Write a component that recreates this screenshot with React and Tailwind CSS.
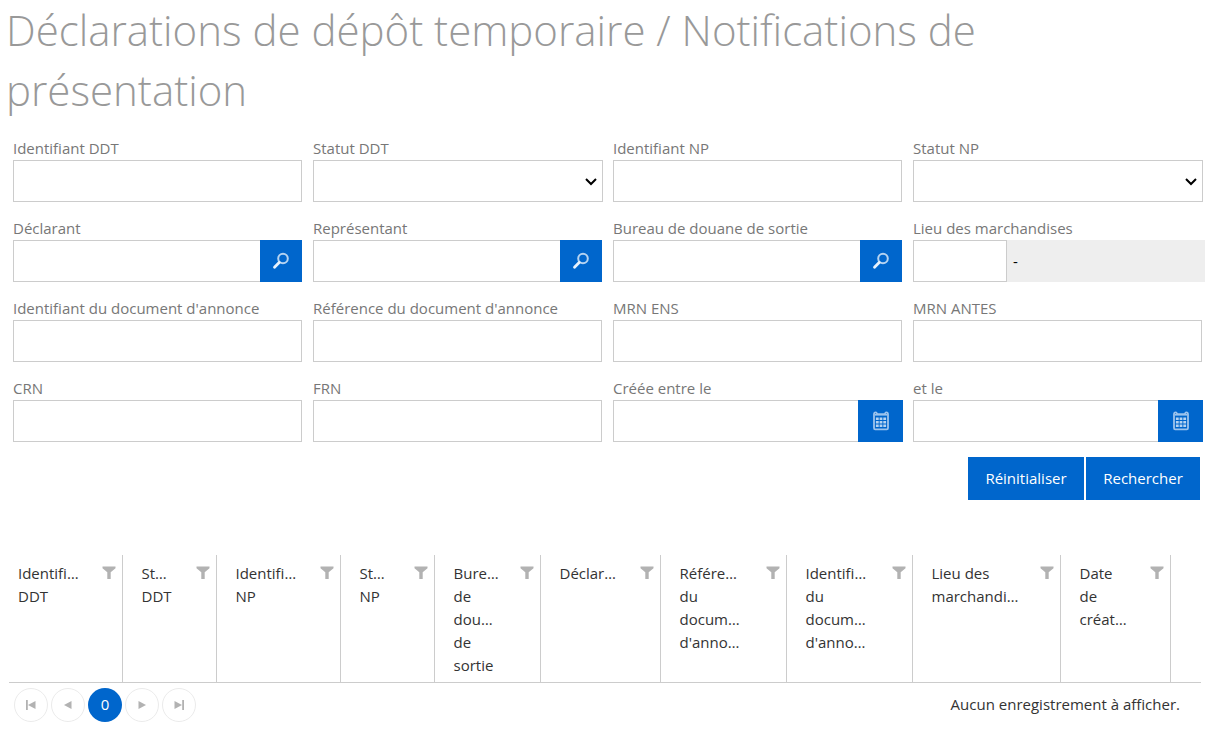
import React from "react";

const BORDER = "border border-[#cccccc]";

function Field({ id, label, children }) {
  return (
    <div className="min-w-0">
      <label htmlFor={id} className="block h-6 text-[15px] leading-6 text-[#777777]">
        {label}
      </label>
      {children}
    </div>
  );
}

function TextField({ id, label }) {
  return (
    <Field id={id} label={label}>
      <input id={id} type="text" className={`block h-[42px] w-full bg-white px-2 ${BORDER}`} />
    </Field>
  );
}

function SelectField({ id, label }) {
  return (
    <Field id={id} label={label}>
      <div className="relative -mr-px">
        <select id={id} className={`block h-[42px] w-full appearance-none bg-white px-2 text-black ${BORDER}`}>
          <option value=""></option>
        </select>
        <svg
          className="pointer-events-none absolute top-[17px] right-[5px]"
          width="14"
          height="10"
          viewBox="0 0 14 10"
          fill="none"
          aria-hidden="true"
        >
          <path d="M2 2 7 7 12 2" stroke="#000000" strokeWidth="2" />
        </svg>
      </div>
    </Field>
  );
}

function SearchIcon() {
  return (
    <svg width="18" height="18" viewBox="0 0 18 18" fill="none" aria-hidden="true">
      <circle cx="11" cy="6.500" r="4.800" stroke="#b5d3f1" strokeWidth="2" />
      <path d="M7.200 10.400 2.500 15.200" stroke="#e8f2fc" strokeWidth="2.800" strokeLinecap="round" />
    </svg>
  );
}

function CalendarIcon() {
  return (
    <svg width="18" height="20" viewBox="0 0 18 20" fill="none" aria-hidden="true">
      <path
        d="M2 17V3.500C2 2.200 2.700 1.300 3.700 1.300 4.700 1.300 4.900 3.200 6 3.200h6c1.100 0 1.300-1.900 2.300-1.900 1 0 1.700.9 1.700 2.200V17c0 .8-.4 1.300-1.200 1.300H3.200C2.400 18.300 2 17.800 2 17Z"
        stroke="#9cc3ec"
        strokeWidth="1.800"
      />
      <path d="M3 3.800h12" stroke="#9cc3ec" strokeWidth="1.600" />
      <g fill="#b5d3f1">
        {[6.5, 10, 13.5].map((y) =>
          [3.9, 7.6, 11.3].map((x) => <rect key={`${x}-${y}`} x={x} y={y} width="2.800" height="2.500" />)
        )}
      </g>
    </svg>
  );
}

function SearchField({ id, label }) {
  return (
    <Field id={id} label={label}>
      <div className="flex">
        <input id={id} type="text" className={`h-[42px] min-w-0 flex-1 border-r-0 bg-white px-2 ${BORDER}`} />
        <button
          type="button"
          aria-label={`Chercher : ${label}`}
          className="flex h-[42px] w-[42px] items-center justify-center bg-[#0066cc]"
        >
          <SearchIcon />
        </button>
      </div>
    </Field>
  );
}

function DateField({ id, label }) {
  return (
    <Field id={id} label={label}>
      <div className="-mr-px flex">
        <input id={id} type="text" className={`h-[42px] min-w-0 flex-1 border-r-0 bg-white px-2 ${BORDER}`} />
        <button
          type="button"
          aria-label={`Calendrier : ${label}`}
          className="flex h-[42px] w-[45px] items-center justify-center bg-[#0066cc]"
        >
          <CalendarIcon />
        </button>
      </div>
    </Field>
  );
}

function LocationField({ id, label }) {
  return (
    <Field id={id} label={label}>
      <div className="-mr-[3px] flex bg-[#eeeeee]">
        <input id={id} type="text" className={`h-[42px] w-[94px] bg-white px-2 ${BORDER}`} />
        <span className="flex-1 px-[6px] text-[15px] leading-[42px] text-black">-</span>
      </div>
    </Field>
  );
}

function FilterIcon() {
  return (
    <svg width="14" height="14" viewBox="0 0 14 14" aria-hidden="true">
      <path d="M.5.500h13v1.700L8.700 6.300V13H5.300V6.300L.5 2.200Z" fill="#b2b2b2" />
    </svg>
  );
}

const COLUMNS = [
  { width: "w-[113px]", lines: ["Identifi…", "DDT"] },
  { width: "w-[94px]", lines: ["St…", "DDT"] },
  { width: "w-[124px]", lines: ["Identifi…", "NP"] },
  { width: "w-[94px]", lines: ["St…", "NP"] },
  { width: "w-[106px]", lines: ["Bure…", "de", "dou…", "de", "sortie"] },
  { width: "w-[120px]", lines: ["Déclar…"] },
  { width: "w-[126px]", lines: ["Référe…", "du", "docum…", "d'anno…"] },
  { width: "w-[126px]", lines: ["Identifi…", "du", "docum…", "d'anno…"] },
  { width: "w-[148px]", lines: ["Lieu des", "marchandi…"] },
  { width: "w-[110px]", lines: ["Date", "de", "créat…"] },
];

function ResultsTable() {
  return (
    <table className="w-full table-fixed border-collapse text-[15px] leading-[23px] text-[#333333]">
      <colgroup>
        {COLUMNS.map((c, i) => (
          <col key={i} className={c.width} />
        ))}
        <col />
      </colgroup>
      <thead>
        <tr className="h-[127px] border-b border-[#cccccc]">
          {COLUMNS.map((c, i) => (
            <th
              key={i}
              scope="col"
              className={`border-r border-[#cccccc] pt-[7px] pr-[6px] text-left align-top font-normal ${
                i === 0 ? "pl-[9px]" : "pl-[19px]"
              }`}
            >
              <div className="flex items-start justify-between">
                <span className="whitespace-nowrap">
                  {c.lines.map((line, n) => (
                    <span key={n} className="block">
                      {line}
                    </span>
                  ))}
                </span>
                <button type="button" aria-label="Filtrer" className="mt-1 shrink-0">
                  <FilterIcon />
                </button>
              </div>
            </th>
          ))}
          <td></td>
        </tr>
      </thead>
    </table>
  );
}

function PagerButton({ label, children }) {
  return (
    <button
      type="button"
      aria-label={label}
      className="flex h-[34px] w-[34px] items-center justify-center rounded-full border border-[#ebebeb]"
    >
      <svg width="12" height="12" viewBox="0 0 12 12" fill="#b2b2b2" aria-hidden="true">
        {children}
      </svg>
    </button>
  );
}

function Pager() {
  return (
    <div className="flex items-center justify-between pt-[5px] pr-[21px] pl-[5px] text-[15px] text-[#333333]">
      <nav aria-label="Pagination" className="flex gap-[3px]">
        <PagerButton label="Première page">
          <path d="M1 1h1.800v10H1ZM10.500 2v8L3 6Z" />
        </PagerButton>
        <PagerButton label="Page précédente">
          <path d="M9.500 2v8L2 6Z" />
        </PagerButton>
        <button
          type="button"
          aria-current="page"
          className="h-[34px] w-[34px] rounded-full bg-[#0066cc] text-[15px] text-white"
        >
          0
        </button>
        <PagerButton label="Page suivante">
          <path d="M2.500 2v8L10 6Z" />
        </PagerButton>
        <PagerButton label="Dernière page">
          <path d="M1.500 2v8L9 6ZM9.200 1H11v10H9.200Z" />
        </PagerButton>
      </nav>
      <p>Aucun enregistrement à afficher.</p>
    </div>
  );
}

export default function App() {
  return (
    <main className="bg-white font-['Open_Sans','Noto_Sans',sans-serif]">
      <h1 className="px-[6px] text-[42px] leading-[60px] font-light text-[#999999]">
        Déclarations de dépôt temporaire / Notifications de{" "}
        <span className="block">présentation</span>
      </h1>

      <form className="mt-4 pr-2 pl-[13px]" onSubmit={(e) => e.preventDefault()}>
        <div className="grid grid-cols-4 gap-x-[11px] gap-y-[14px]">
          <TextField id="id-ddt" label="Identifiant DDT" />
          <SelectField id="statut-ddt" label="Statut DDT" />
          <TextField id="id-np" label="Identifiant NP" />
          <SelectField id="statut-np" label="Statut NP" />

          <SearchField id="declarant" label="Déclarant" />
          <SearchField id="representant" label="Représentant" />
          <SearchField id="bureau" label="Bureau de douane de sortie" />
          <LocationField id="lieu" label="Lieu des marchandises" />

          <TextField id="id-annonce" label="Identifiant du document d'annonce" />
          <TextField id="ref-annonce" label="Référence du document d'annonce" />
          <TextField id="mrn-ens" label="MRN ENS" />
          <TextField id="mrn-antes" label="MRN ANTES" />

          <TextField id="crn" label="CRN" />
          <TextField id="frn" label="FRN" />
          <DateField id="date-debut" label="Créée entre le" />
          <DateField id="date-fin" label="et le" />
        </div>

        <div className="mt-[15px] flex justify-end gap-[2px] pr-[2px]">
          <button type="reset" className="h-[43px] w-[116px] bg-[#0066cc] text-[15px] text-white">
            Réinitialiser
          </button>
          <button type="submit" className="h-[43px] w-[114px] bg-[#0066cc] text-[15px] text-white">
            Rechercher
          </button>
        </div>
      </form>

      <section className="mt-[55px] pr-[9px] pl-[9px]">
        <ResultsTable />
        <Pager />
      </section>
    </main>
  );
}
